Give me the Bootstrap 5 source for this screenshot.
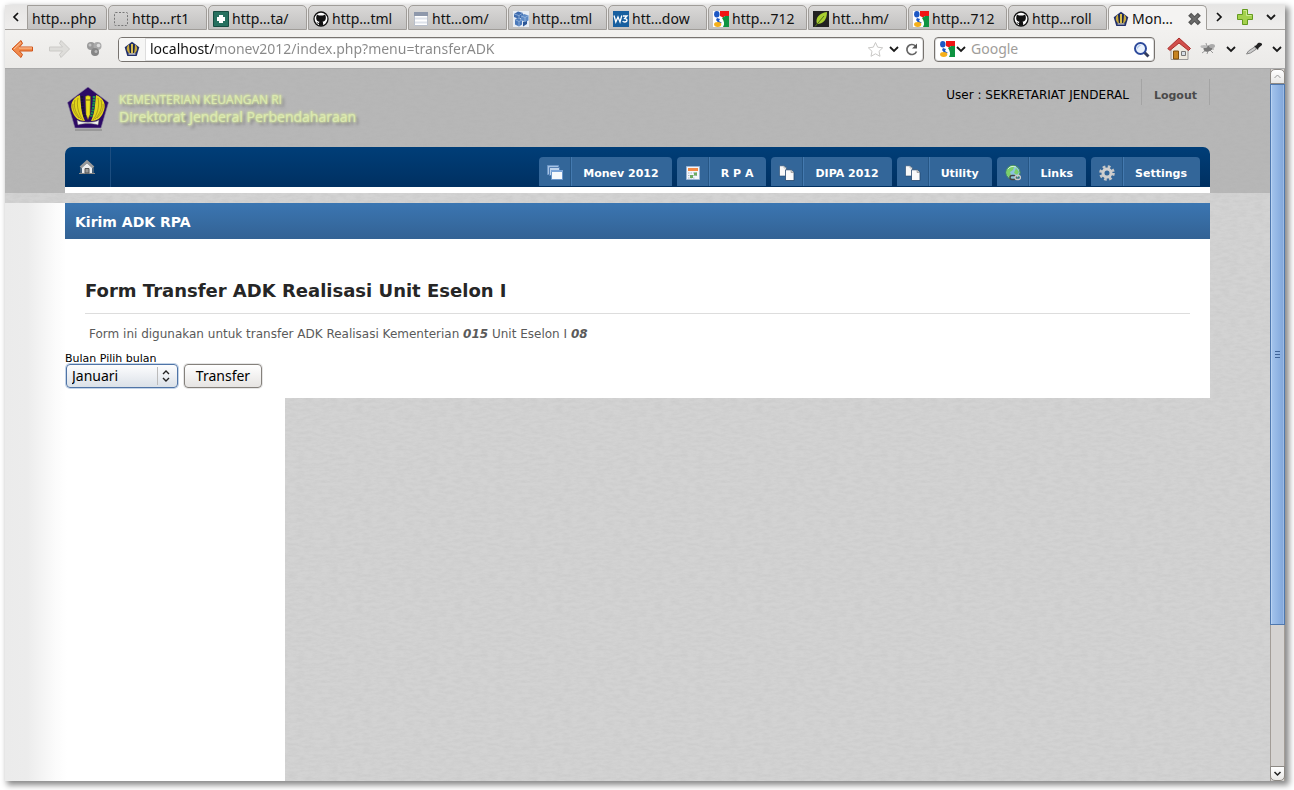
<!DOCTYPE html>
<html lang="id">
<head>
<meta charset="utf-8">
<meta name="viewport" content="width=device-width, initial-scale=1">
<title>Monev 2012</title>
<link href="https://cdn.jsdelivr.net/npm/bootstrap@5.3.0/dist/css/bootstrap.min.css" rel="stylesheet">
<style>
:root{
  --chrome-font:"Noto Sans","Open Sans",sans-serif;
  --page-font:"DejaVu Sans",sans-serif;
  --paper:url("data:image/svg+xml,%3Csvg xmlns='http://www.w3.org/2000/svg' width='200' height='200'%3E%3Cfilter id='n' x='0' y='0' width='100%25' height='100%25'%3E%3CfeTurbulence type='fractalNoise' baseFrequency='.12 .35' numOctaves='3' seed='4' stitchTiles='stitch'/%3E%3CfeColorMatrix values='0 0 0 0 .4 0 0 0 0 .4 0 0 0 0 .4 .32 0 0 0 -.1'/%3E%3C/filter%3E%3Crect width='200' height='200' filter='url(%23n)'/%3E%3C/svg%3E");
}
body{background:#fff;font-family:var(--page-font);font-size:11px;color:#000;padding:5px 9px 9px 5px}
svg{display:block;flex:none}
.browser{box-shadow:3px 3px 6px 1px #888;background:#efeeec}
.browser button{border:0;background:none;padding:0;color:inherit}
/* tab strip */
.tabstrip{height:25px;font:14px/24px var(--chrome-font);background:linear-gradient(#e6e5e4,#efeeed)}
.tabstrip .edge{border-bottom:1px solid #a3a09c}
.strip-prev{width:22px}
.strip-end{width:78px;padding-left:6px}
.page-tab{flex:1 1 0;min-width:0;height:25px;padding:2px 0 0 4px;gap:3px;border:1px solid #a09d99;border-radius:5px 5px 0 0;background:linear-gradient(#d9d8d7,#c2c1c0);margin-right:1px;color:#111;text-decoration:none;white-space:nowrap;overflow:hidden}
.page-tab.first-tab{flex:0 0 80px;border-top-left-radius:0}
.page-tab.current{background:#f4f3f2;border-bottom-color:#f4f3f2;margin-right:0}
.page-tab .tab-text{line-height:20px}
/* toolbar */
.toolbar{height:39px;padding:0 2px 0 6px;background:linear-gradient(#f2f1ef,#ebeae8);border-bottom:1px solid #aaa;font:14px/20px var(--chrome-font)}
.nav-buttons{gap:15px;margin-right:15px}
.tool-buttons{gap:8px;padding-left:3px}
.field{height:25px;border:1px solid #77736f;border-radius:4px;background:#fff;box-shadow:inset 0 0 0 1px #ddd}
.field input{border:0;outline:0;padding:0;background:none;min-width:0;width:100%;font:14px/20px var(--chrome-font)}
.field input::placeholder{color:#a09d9a;opacity:1}
.site-id{flex:0 0 27px;height:23px;background:#f6f6f5;border-right:1px solid #ddd;border-radius:3px 0 0 3px}
.field .address{background:linear-gradient(to right,#111 64px,#888 64px);-webkit-background-clip:text;background-clip:text;color:transparent}
.search-field{flex:0 0 221px;margin:0 9px 0 10px}
/* page */
.viewport{height:calc(100vh - 78px);min-height:400px}
.page{background:var(--paper),#d3d3d3;min-width:0}
.masthead{background:var(--paper),#b7b7b7;padding:0 60px}
.brandbar{height:78px}
.brand{padding:18px 0 0 2px;gap:10px;color:#dce9b3;font-family:"Open Sans",sans-serif;text-decoration:none;text-shadow:0 0 3px #dcf09a,0 0 2px #dcf09a,3px 3px 3px #777}
.brand:hover{color:#dce9b3}
.brand .captions{padding-top:5px}
.brand .ministry{font-size:12px;line-height:16px;display:block}
.brand .office{font-size:14px;line-height:18px;display:block}
.account{margin-top:10px;font-size:12px}
.account > *{line-height:25px;padding:4px 12px 0}
.account a{border:solid #a4a4a4;border-width:0 1px;color:#4b4b4b;font-size:11px;font-weight:bold;text-decoration:none;height:26px;padding-top:4px}
.mainnav{height:40px;border-radius:7px 7px 0 0;background:linear-gradient(#003e78,#003061);padding-right:10px}
.home-link{width:46px;border-right:1px solid #1c4d7f;padding-right:2px}
.menu-set{gap:5px;padding-bottom:1px}
.menu-link{height:29px;border-radius:4px 4px 0 0;background:#336699;color:#fff;font-weight:bold;text-decoration:none;white-space:nowrap}
.menu-link:hover{color:#fff;background:#3b70a5}
.menu-link svg{width:16px;height:16px;margin:2px 8px 0}
.menu-link .menu-text{height:29px;line-height:33px;padding:0 13px 0 11px;border-left:1px solid #447ab0;box-shadow:-1px 0 #265685}
.underbar{height:6px;background:#fff}
.workspace{margin-top:10px;padding:0 60px;background:linear-gradient(to right,#ebebeb 0,#ececec 22px,#fbfbfb 50px,#fff 62px) 0 0/280px 100% no-repeat}
.panel-title{margin:0;height:36px;padding-left:10px;font-size:14px;line-height:38px;font-weight:bold;color:#fff;background:linear-gradient(#3b76b2,#336294)}
.sheet{background:#fff;height:159px}
.sheet-text{padding:40px 20px 0}
.sheet h2{font-size:18px;line-height:24px;font-weight:bold;color:#262626;margin:0;padding-bottom:10px;border-bottom:1px solid #ddd}
.sheet p{font-size:12px;line-height:18px;color:#5a5a5a;margin:11px 0 0 4px}
.transfer-form{padding-top:10px}
.transfer-form label{display:block;line-height:11px}
.transfer-form .month{appearance:none;width:112px;height:24px;padding:0 5px;border:1px solid #4f74a6;border-radius:4px;color:#000;font:14px/20px var(--chrome-font);background:url("data:image/svg+xml,%3Csvg xmlns='http://www.w3.org/2000/svg' width='20' height='22'%3E%3Cpath d='M.5 2v18' stroke='%23bbb'/%3E%3Cpath d='M6 9l3-3 3 3M6 13l3 3 3-3' fill='none' stroke='%23222' stroke-width='1.4'/%3E%3C/svg%3E") right center no-repeat,linear-gradient(#fdfdfe,#dbe1e8);box-shadow:0 0 0 1px #c4d4e8}
.transfer-form .send{width:78px;height:24px;border:1px solid #85817c;border-radius:4px;font:14px/20px var(--chrome-font);color:#000;background:linear-gradient(#fff,#e6e4e2);box-shadow:0 0 0 1px #e6e6e6}
.transfer-form .controls{gap:6px;padding-left:1px}
/* scrollbar */
.scroller{flex:0 0 15px;background:#d5d3d1;border:solid #a39d97;border-width:0 1px}
.scroller .step{height:15px;margin:0 -1px;border:1px solid #8d8984;background:linear-gradient(#fff,#e8e7e5)}
.scroller .step.up{border-radius:5px 5px 0 0}
.scroller .step.down{border-radius:0 0 5px 5px}
.scroller .thumb{flex:541 0 0;margin:0 -1px;border:1px solid #4f78ae;background:linear-gradient(to right,#a5c5ed,#8eb2e2 60%,#82a6d8);box-shadow:inset 1px 0 #b9d3f3,inset -1px 0 #9dbce6}
.scroller .rest{flex:142 0 0}
</style>
<script src="https://cdn.jsdelivr.net/npm/bootstrap@5.3.0/dist/js/bootstrap.bundle.min.js"></script>
</head>
<body>
<svg width="0" height="0" class="position-absolute" aria-hidden="true">
  <defs>
    <symbol id="chev" viewBox="0 0 12 12"><path d="M2 4l4 4 4-4" fill="none" stroke="#1a1a1a" stroke-width="1.8"/></symbol>
    <symbol id="crest" viewBox="0 0 42 44">
      <path d="M8 42h27v2H8z" fill="#999"/>
      <path d="M21 0l20.500 15.500L34 41H8L.5 15.500z" fill="#2d0a66" stroke="#8d86a0" stroke-width=".6"/>
      <path d="M13 8C5 11 2 18 6 26c2 5 6 8 12 8-4-8-4-17-5-26zM29 8c8 3 11 10 7 18-2 5-6 8-12 8 4-8 4-17 5-26z" fill="#e2d51c"/>
      <path d="M11 11c-2 8 1 17 5 22M8 13c-2 7 1 14 6 19M6 17c-1 5 2 10 6 14M31 11c2 8-1 17-5 22M34 13c2 7-1 14-6 19M36 17c1 5-2 10-6 14" fill="none" stroke="#8a7616" stroke-width=".6"/>
      <path d="M18.500 9.500q2.500-2 5 0l-.5 18-2 5-2-5z" fill="#eadf22" stroke="#6c5a12" stroke-width=".5"/>
      <path d="M19 13h4" stroke="#6c5a12"/>
      <path d="M15 9c0 8 1 15 3 21" fill="none" stroke="#151530" stroke-width="2.500" stroke-dasharray="2 .7"/>
      <path d="M27 9c0 8-1 15-3 21" fill="none" stroke="#16974c" stroke-width="2.500" stroke-dasharray="2 .7"/>
      <path d="M10 33c4 3 18 3 22 0l-1 5c-5-2-15-2-20 0z" fill="#f4f4f0" stroke="#777" stroke-width=".5"/>
    </symbol>
    <symbol id="crest-s" viewBox="0 0 16 16"><path d="M8 .8l7.300 5.500-2.600 8.700H3.300L.7 6.300z" fill="#22306a"/><path d="M5 3.500C2 5.500 2 10 5.500 12.500h5C14 10 14 5.500 11 3.500l-.8 8H5.800z" fill="#c9a93a"/><path d="M8 3v9" stroke="#d7bd4d" stroke-width="2"/><path d="M6 4l.5 8M10 4l-.5 8" stroke="#1c2340"/><path d="M4.500 13h7" stroke="#ddd" stroke-width="1.200"/></symbol>
    <symbol id="goog" viewBox="0 0 16 16"><path fill="#fff" d="M0 0h16v16H0z"/><path d="M7 0h9v5h-4c-1 0-1.500 1-1 2L7 5z" fill="#f01414"/><path d="M9 7l3-2h4v11h-6c2-3 1-6-1-9z" fill="#0d9340"/><ellipse cx="3.800" cy="3.200" rx="2.700" ry="3.200" fill="#1c57c4"/><path d="M4 7l3 1-1 2 3 2-3 .5L3 9z" fill="#1c57c4"/><ellipse cx="4.700" cy="13.500" rx="3.600" ry="2.400" fill="#f6b01a"/></symbol>
    <symbol id="cat" viewBox="0 0 16 16"><circle cx="8" cy="8" r="7" fill="#fff" stroke="#111" stroke-width="1.300"/><path d="M4 3.500l2 1h4l2-1c1 2 1 3 .7 4.500C12.300 10 11 10.500 9.500 10.700c.7.6.7 1.300.7 4H6v-2c-1.500.3-2-.4-2.500-1.400 1 0 1.300.9 2.500.6.100-.6.200-1 .5-1.200C4.800 10.500 3.700 10 3.300 8 3 6.500 3.400 5 4 3.500z" fill="#111"/></symbol>
    <symbol id="docs" viewBox="0 0 16 16"><path d="M.5.800H5l2.500 2.200V11h-7z" fill="#f8f8f8" stroke="#24466d" stroke-width=".6"/><path d="M5 .8V3h2.500" fill="none" stroke="#888" stroke-width=".5"/><path d="M6.500 4.800H12l3 2.700v8H6.500z" fill="#fafafa" stroke="#24466d" stroke-width=".8"/><path d="M12 4.800v2.700h3" fill="#ccc" stroke="#777" stroke-width=".5"/></symbol>
  </defs>
</svg>

<div class="browser">
  <nav class="tabstrip d-flex" aria-label="Tab">
    <button class="strip-prev edge d-flex align-items-center justify-content-center" aria-label="Tab sebelumnya"><svg width="12" height="12"><path d="M8 2L4 6l4 4" fill="none" stroke="#111" stroke-width="1.700"/></svg></button>
    <a href="#" class="page-tab first-tab d-flex align-items-center"><span class="tab-text">http…php</span></a>
    <a href="#" class="page-tab d-flex align-items-center"><svg width="16" height="16"><rect x="1.500" y="1.500" width="13" height="13" rx="1" fill="none" stroke="#777" stroke-dasharray="2 1.500"/></svg><span class="tab-text">http…rt1</span></a>
    <a href="#" class="page-tab d-flex align-items-center"><svg width="16" height="16"><path fill="#27705f" stroke="#164c40" d="M.5.500h15v15H.5z"/><path d="M6 4h4v2h2v4h-2v2H6v-2H4V6h2z" fill="#fff"/></svg><span class="tab-text">http…ta/</span></a>
    <a href="#" class="page-tab d-flex align-items-center"><svg width="16" height="16"><use href="#cat"/></svg><span class="tab-text">http…tml</span></a>
    <a href="#" class="page-tab d-flex align-items-center"><svg width="16" height="16"><path fill="#fff" stroke="#b9bfca" d="M1.500 1.500h13v13h-13z"/><path fill="#8e98ab" d="M1 1h14v4H1z"/><path d="M2 7.500h12M2 11.500h12" stroke="#dde2ea" stroke-width="2"/></svg><span class="tab-text">htt…om/</span></a>
    <a href="#" class="page-tab d-flex align-items-center"><svg width="16" height="16"><path fill="#e9eef5" d="M0 0h16v16H0z"/><path d="M5 .5l5 1.500v4L6 8 1 6V3z" fill="#3f6cae"/><path d="M11 3l4.500 1.500v5L12 11 8 9V5z" fill="#5d8ac6"/><path d="M4.500 7L9 9v4.500L6 15.500l-4-2v-5z" fill="#4a79ba"/><path d="M10 11l4-1v3l-4 2.500z" fill="#2c5797"/><path d="M1 3l5 1.500L10 2M6 4.500V8M8 5l4 1.500 3.500-2M12 6.500V11M2 8.500l4 2L9 9M6 10.500v5" fill="none" stroke="#a5c2e4" stroke-width=".7"/></svg><span class="tab-text">http…tml</span></a>
    <a href="#" class="page-tab d-flex align-items-center"><svg width="16" height="16"><path fill="#175f9f" d="M0 0h16v16H0z"/><path d="M1 4.500l1.800 6.500L5 6l2 5 1.800-6.500M10 5h4l-2.300 2.500c3 .2 3 3.500 0 3.500-1 0-1.700-.4-2-1" fill="none" stroke="#fff" stroke-width="1.300"/></svg><span class="tab-text">htt…dow</span></a>
    <a href="#" class="page-tab d-flex align-items-center"><svg width="16" height="16"><use href="#goog"/></svg><span class="tab-text">http…712</span></a>
    <a href="#" class="page-tab d-flex align-items-center"><svg width="16" height="16"><path fill="#222" d="M0 0h16v16H0z"/><path d="M14 1C6 2 2 7 4 13c6 0 10-4 10-12z" fill="#a9cf31"/><path d="M2 15.500L11 5" stroke="#54731a"/></svg><span class="tab-text">htt…hm/</span></a>
    <a href="#" class="page-tab d-flex align-items-center"><svg width="16" height="16"><use href="#goog"/></svg><span class="tab-text">http…712</span></a>
    <a href="#" class="page-tab d-flex align-items-center"><svg width="16" height="16"><use href="#cat"/></svg><span class="tab-text">http…roll</span></a>
    <a href="#" class="page-tab current d-flex align-items-center" aria-current="page"><svg width="16" height="16"><use href="#crest-s"/></svg><span class="tab-text">Mon…</span><svg class="ms-auto me-1" width="15" height="14" viewBox="0 0 13 13"><path d="M2 2l9 9M11 2l-9 9" stroke="#555" stroke-width="4"/><path d="M3 3l7 7M10 3l-7 7" stroke="#6c6c6c" stroke-width="2"/></svg></a>
    <div class="strip-end edge d-flex align-items-center">
      <button aria-label="Tab berikutnya"><svg width="12" height="12"><path d="M4 2l4 4-4 4" fill="none" stroke="#111" stroke-width="1.700"/></svg></button>
      <button class="ms-2 ps-1" aria-label="Tab baru"><svg width="16" height="16" viewBox="1 0 16 16"><path d="M6.500.500h5v5h5v5h-5v5h-5v-5h-5v-5h5z" fill="#a4d14c" stroke="#649a1f"/><path d="M7.500 1.500h3v5h5" fill="none" stroke="#cdea8f"/></svg></button>
      <button class="ms-2 ps-1" aria-label="Daftar tab"><svg width="12" height="12"><use href="#chev"/></svg></button>
    </div>
  </nav>

  <div class="toolbar d-flex align-items-center">
    <div class="nav-buttons d-flex align-items-center">
      <button aria-label="Kembali"><svg width="23" height="20"><path d="M10 1.500L1 10l9 8.500 1.500-3L8.500 12H21.500V8H8.500l3-3.500z" fill="#f08a4b" stroke="#d0541a" stroke-linejoin="round"/><path d="M3 10l7-6.500M8 9h13" stroke="#fbc39b" fill="none"/></svg></button>
      <button aria-label="Maju"><svg width="22" height="20"><path d="M12 1.500l8.500 8.500-8.500 8.500-1.500-3 3-3.500H.5V8h13l-3-3.500z" fill="#deddda" stroke="#cbcac7" stroke-linejoin="round"/></svg></button>
      <button aria-label="Ekstensi"><svg width="17" height="18"><circle cx="5" cy="6" r="4" fill="#999"/><circle cx="11.500" cy="6" r="4" fill="#aaa"/><circle cx="9" cy="12" r="4" fill="#858585"/><circle cx="12.500" cy="5.500" r="1.800" fill="#ddd"/><circle cx="4" cy="5" r="1.500" fill="#c4c4c4"/><circle cx="10" cy="11.500" r="1.500" fill="#b9b9b9"/></svg></button>
    </div>
    <div class="field d-flex align-items-center flex-grow-1">
      <span class="site-id d-flex align-items-center justify-content-center"><svg width="16" height="16"><use href="#crest-s"/></svg></span>
      <input class="address ms-1" type="text" aria-label="Alamat" value="localhost/monev2012/index.php?menu=transferADK">
      <svg width="17" height="17"><path d="M8.500 1.500l2.200 4.700 5 .6-3.700 3.500 1 5-4.500-2.500L4 15.300l1-5L1.300 6.800l5-.6z" fill="#fff" stroke="#c9c8c6"/></svg>
      <svg class="ms-1" width="12" height="12"><use href="#chev"/></svg>
      <button class="mx-1" aria-label="Muat ulang"><svg width="15" height="15"><path d="M12.500 9.500a5 5 0 1 1-1-5.500" fill="none" stroke="#666" stroke-width="1.700"/><path d="M13 1.500v5H8z" fill="#555"/></svg></button>
    </div>
    <div class="field search-field d-flex align-items-center ps-1 pe-1">
      <svg width="16" height="16"><use href="#goog"/></svg><svg width="12" height="12"><use href="#chev"/></svg>
      <input class="ms-1" type="text" aria-label="Cari" placeholder="Google">
      <button aria-label="Cari di Google"><svg width="17" height="17"><path d="M11 11l4.500 4.500" stroke="#333c5c" stroke-width="3"/><circle cx="7.500" cy="7.500" r="5.500" fill="#eaf2fd" stroke="#2d4a9b" stroke-width="2"/><path d="M4.500 7.500a3 3 0 0 1 3-3" stroke="#9ebbe5" fill="none"/></svg></button>
    </div>
    <div class="tool-buttons d-flex align-items-center">
      <button aria-label="Beranda"><svg width="24" height="24"><path d="M4 11v11.500h17V11l-8.500-7z" fill="#eeeae0" stroke="#999"/><path d="M12 1L.8 11.500l2 2L12 6l9.500 7.500 2-2z" fill="#d2504c" stroke="#a92d2a"/><path d="M12 2.500L5 9l7-4.500L19 9z" fill="#d2504c"/><path d="M6.500 22v-8h5v8z" fill="#c68420" stroke="#80500c"/><path d="M14.500 14.500h4v4h-4z" fill="#d5dde5" stroke="#777"/></svg></button>
      <button aria-label="Firebug"><svg width="18" height="18"><path d="M2 6l4 3M3 13l4-3M8 14l1-3M14 13l-3-3M15 9h-3M7 3l1 4" stroke="#999"/><ellipse cx="9" cy="8.500" rx="4.500" ry="3" fill="#777" transform="rotate(-20 9 8.500)"/><ellipse cx="13" cy="6" rx="3" ry="2" fill="#aaa"/><ellipse cx="5" cy="6.500" rx="3.500" ry="1.500" fill="#bbb"/></svg></button>
      <svg width="12" height="12"><use href="#chev"/></svg>
      <button aria-label="Pipet warna"><svg width="18" height="16"><path d="M1.500 13l2-3 6-4 2 2-6 4z" fill="#ccc" stroke="#888"/><path d="M9 5l2-.5 2-2.500c3-1 4.500.5 4 2l-3.500 3-.5 2z" fill="#222"/></svg></button>
      <svg width="12" height="12"><use href="#chev"/></svg>
    </div>
  </div>

  <div class="viewport d-flex">
    <main class="page flex-grow-1 d-flex flex-column">
      <header class="masthead">
        <div class="brandbar d-flex justify-content-between align-items-start">
          <a href="#" class="brand d-flex"><svg width="42" height="44"><use href="#crest"/></svg><span class="captions"><span class="ministry">KEMENTERIAN KEUANGAN RI</span><span class="office">Direktorat Jenderal Perbendaharaan</span></span></a>
          <div class="account d-flex"><span>User : SEKRETARIAT JENDERAL</span><a href="#">Logout</a></div>
        </div>
        <nav class="mainnav d-flex justify-content-between" aria-label="Menu utama">
          <a href="#" class="home-link d-flex align-items-center justify-content-center" aria-label="Beranda"><svg width="16" height="16"><path d="M3 8.500V14h10V8.500L8 4z" fill="#eee"/><path d="M1.500 8.500L8 2.500l6.500 6" fill="none" stroke="#999" stroke-width="2.400"/><path d="M0 14.500h16M2 9v5M14 9v5" stroke="#888"/><path d="M6 14v-4.500h4V14z" fill="#999" stroke="#555"/></svg></a>
          <div class="menu-set d-flex align-self-end">
            <a href="#" class="menu-link d-flex align-items-center"><svg viewBox="0 0 16 16"><path d="M.5.500h11v9H.5z" fill="#a7c3e3" stroke="#6c96c6"/><path d="M2.500 2.500h10v8h-10z" fill="#bdd3ec" stroke="#5680b4"/><path d="M4.500 5.500h11v9h-11z" fill="#f7f9fc" stroke="#6b96ca"/><path d="M4 5h12v2H4z" fill="#7ba4d8"/></svg><span class="menu-text">Monev 2012</span></a>
            <a href="#" class="menu-link d-flex align-items-center"><svg viewBox="0 0 16 16"><path d="M1.500 1.500h13v13h-13z" fill="#f4f6fa" stroke="#9bb5d4"/><path d="M3 3h10v3H3z" fill="#f48a46"/><path d="M3 8h10M3 10.500h10M3 13h7" stroke="#a9b9cc" stroke-dasharray="1.500 1"/><path d="M9 7.500h3v3H9zM5 10h3v3H5z" fill="#6dab60"/></svg><span class="menu-text">R P A</span></a>
            <a href="#" class="menu-link d-flex align-items-center"><svg><use href="#docs"/></svg><span class="menu-text">DIPA 2012</span></a>
            <a href="#" class="menu-link d-flex align-items-center"><svg><use href="#docs"/></svg><span class="menu-text">Utility</span></a>
            <a href="#" class="menu-link d-flex align-items-center"><svg viewBox="0 0 16 16"><circle cx="8" cy="7.500" r="7" fill="#8cc4dc" stroke="#4b9a57"/><path d="M2 5l4-4 3 1-1 3-3 2 1 3-2 2C1 10 1 7 2 5zM11 3l3 4-2 3-3-2z" fill="#7bd069"/><path d="M3 4c2-3 6-3 8-2" stroke="#d8f5d8" fill="none"/><rect x="5" y="10.500" width="6" height="4" rx="2" fill="none" stroke="#444" stroke-width="1.500"/><rect x="10" y="10.500" width="5.500" height="4" rx="2" fill="none" stroke="#ccc" stroke-width="1.300"/></svg><span class="menu-text">Links</span></a>
            <a href="#" class="menu-link d-flex align-items-center"><svg viewBox="0 0 16 16"><circle cx="8" cy="8" r="6.300" fill="none" stroke="#c8c8c8" stroke-width="3" stroke-dasharray="2.600 2.350"/><circle cx="8" cy="8" r="4" fill="none" stroke="#cfcfcf" stroke-width="3"/></svg><span class="menu-text">Settings</span></a>
          </div>
        </nav>
        <div class="underbar"></div>
      </header>

      <div class="workspace flex-grow-1">
        <h1 class="panel-title">Kirim ADK RPA</h1>
        <section class="sheet">
          <div class="sheet-text">
            <h2>Form Transfer ADK Realisasi Unit Eselon I</h2>
            <p>Form ini digunakan untuk transfer ADK Realisasi Kementerian <b><i>015</i></b> Unit Eselon I <b><i>08</i></b></p>
          </div>
          <form class="transfer-form">
            <label for="bulan">Bulan Pilih bulan</label>
            <div class="controls d-flex">
              <select id="bulan" class="month"><option>Januari</option><option>Februari</option><option>Maret</option></select>
              <button type="button" class="send">Transfer</button>
            </div>
          </form>
        </section>
      </div>
    </main>
    <div class="scroller d-flex flex-column">
      <button class="step up d-flex align-items-center justify-content-center" aria-label="Gulir ke atas"><svg width="9" height="9"><path d="M1.500 6l3-3 3 3" fill="none" stroke="#999"/></svg></button>
      <div class="thumb d-flex align-items-center justify-content-center"><svg width="5" height="7"><path d="M0 .5h5M0 3.500h5M0 6.500h5" stroke="#3f6499"/></svg></div>
      <div class="rest"></div>
      <button class="step down d-flex align-items-center justify-content-center" aria-label="Gulir ke bawah"><svg width="9" height="9"><path d="M1.500 3l3 3 3-3" fill="none" stroke="#222" stroke-width="1.500"/></svg></button>
    </div>
  </div>
</div>
</body>
</html>
